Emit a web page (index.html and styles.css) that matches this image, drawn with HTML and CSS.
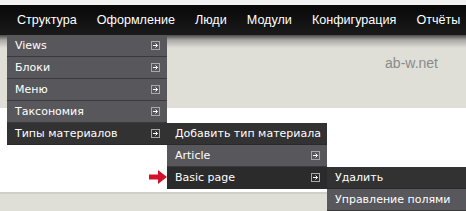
FILE: index.html
```html
<!DOCTYPE html>
<html>
<head>
<meta charset="utf-8">
<link rel="stylesheet" href="styles.css">
</head>
<body>
<div class="page">
  <div class="topstrip"></div>
  <nav class="navbar">
    <span class="nav-item">Структура</span>
    <span class="nav-item">Оформление</span>
    <span class="nav-item">Люди</span>
    <span class="nav-item">Модули</span>
    <span class="nav-item">Конфигурация</span>
    <span class="nav-item">Отчёты</span>
  </nav>
  <div class="header">
    <span class="site">ab-w.net</span>
  </div>
  <div class="content"></div>
  <div class="footer"></div>

  <ul class="menu menu-1">
    <li class="row light"><span>Views</span><svg class="ico" width="9" height="9" viewBox="0 0 9 9"><rect x="0.5" y="0.5" width="8" height="8" fill="none" stroke="#a9a9a9"/><path d="M2 4.5H6.5M4.5 2.5L6.5 4.5L4.5 6.5" fill="none" stroke="#fff" stroke-width="1"/></svg></li>
    <li class="row light"><span>Блоки</span><svg class="ico" width="9" height="9" viewBox="0 0 9 9"><rect x="0.5" y="0.5" width="8" height="8" fill="none" stroke="#a9a9a9"/><path d="M2 4.5H6.5M4.5 2.5L6.5 4.5L4.5 6.5" fill="none" stroke="#fff" stroke-width="1"/></svg></li>
    <li class="row light"><span>Меню</span><svg class="ico" width="9" height="9" viewBox="0 0 9 9"><rect x="0.5" y="0.5" width="8" height="8" fill="none" stroke="#a9a9a9"/><path d="M2 4.5H6.5M4.5 2.5L6.5 4.5L4.5 6.5" fill="none" stroke="#fff" stroke-width="1"/></svg></li>
    <li class="row light"><span>Таксономия</span><svg class="ico" width="9" height="9" viewBox="0 0 9 9"><rect x="0.5" y="0.5" width="8" height="8" fill="none" stroke="#a9a9a9"/><path d="M2 4.5H6.5M4.5 2.5L6.5 4.5L4.5 6.5" fill="none" stroke="#fff" stroke-width="1"/></svg></li>
    <li class="row dark"><span>Типы материалов</span><svg class="ico" width="9" height="9" viewBox="0 0 9 9"><rect x="0.5" y="0.5" width="8" height="8" fill="none" stroke="#a9a9a9"/><path d="M2 4.5H6.5M4.5 2.5L6.5 4.5L4.5 6.5" fill="none" stroke="#fff" stroke-width="1"/></svg></li>
  </ul>

  <ul class="menu menu-2">
    <li class="row dark"><span>Добавить тип материала</span></li>
    <li class="row light"><span>Article</span><svg class="ico" width="9" height="9" viewBox="0 0 9 9"><rect x="0.5" y="0.5" width="8" height="8" fill="none" stroke="#a9a9a9"/><path d="M2 4.5H6.5M4.5 2.5L6.5 4.5L4.5 6.5" fill="none" stroke="#fff" stroke-width="1"/></svg></li>
    <li class="row darker"><span>Basic page</span><svg class="ico" width="9" height="9" viewBox="0 0 9 9"><rect x="0.5" y="0.5" width="8" height="8" fill="none" stroke="#a9a9a9"/><path d="M2 4.5H6.5M4.5 2.5L6.5 4.5L4.5 6.5" fill="none" stroke="#fff" stroke-width="1"/></svg></li>
  </ul>

  <ul class="menu menu-3">
    <li class="row dark"><span>Удалить</span></li>
    <li class="row light"><span>Управление полями</span></li>
  </ul>

  <svg class="pointer" width="19" height="14" viewBox="0 0 19 14"><path d="M0 4.5H9V0L18 7L9 14V9.5H0Z" fill="#d2112b"/></svg>
</div>
</body>
</html>
```

FILE: styles.css
```css
html, body {
  margin: 0;
  padding: 0;
}
body {
  width: 466px;
  height: 211px;
  overflow: hidden;
  background: #dfdfd8;
}
.page {
  position: relative;
  width: 466px;
  height: 211px;
  overflow: hidden;
}
.topstrip {
  height: 5px;
  background: #f1f1f1;
}
.navbar {
  height: 30px;
  display: flex;
  align-items: center;
  padding-left: 7px;
  background: linear-gradient(#080808, #1a1a1a);
  font-family: "Liberation Sans", Arial, sans-serif;
  font-size: 12.6px;
  color: #fff;
  white-space: nowrap;
}
.nav-item {
  padding: 0 10px;
}
.header {
  height: 73px;
  box-sizing: border-box;
  padding: 20px 28px 0 0;
  display: flex;
  justify-content: flex-end;
  align-items: flex-start;
  background: linear-gradient(#4a4a4a 0px, #a9a8a4 5px, #dfdfd8 13px, #dfdfd8 100%);
  font-family: "Liberation Sans", Arial, sans-serif;
  font-size: 14px;
  line-height: 16px;
  color: #8a8a8a;
}
.content {
  height: 84px;
  background: #fff;
  border-bottom: 2px solid #cfcfca;
}
.footer {
  height: 17px;
  background: #dfdfd8;
}
.menu {
  position: absolute;
  list-style: none;
  margin: 0;
  padding: 0;
  width: 160px;
  font-family: "DejaVu Sans", Verdana, sans-serif;
  font-size: 11px;
  color: #fff;
}
.menu-1 { left: 7px; top: 35px; }
.menu-2 { left: 167px; top: 123px; }
.menu-3 { left: 327px; top: 167px; }
.row {
  height: 21px;
  border-bottom: 1px solid #3a3a3c;
  display: flex;
  align-items: center;
  justify-content: space-between;
  padding: 0 7px 0 8px;
  white-space: nowrap;
}
.row.light { background: #58575c; }
.row.dark { background: #323232; border-bottom-color: #2a2a2a; }
.row.darker { background: #2b2b2b; border-bottom-color: #2b2b2b; }
.ico {
  display: block;
  flex: none;
}
.pointer {
  position: absolute;
  left: 149px;
  top: 170px;
}
```
